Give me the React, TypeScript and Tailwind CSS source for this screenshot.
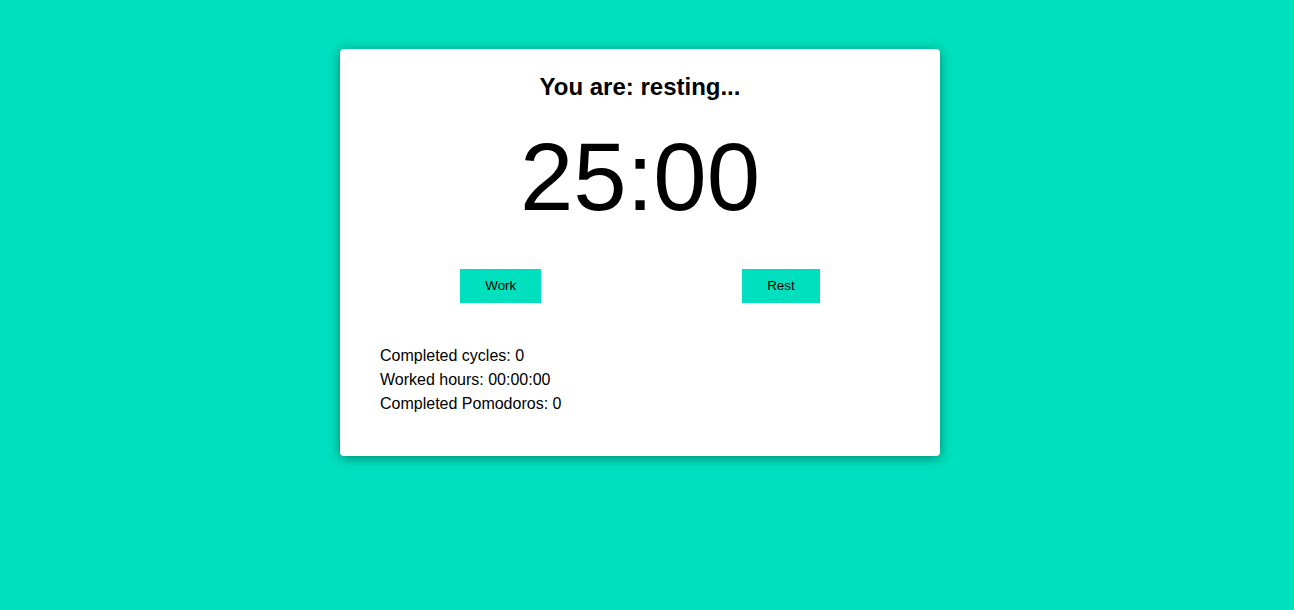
import { useState } from "react";

const App = () => {
	const [mode, setMode] = useState<"working" | "resting">("resting");
	const cycles = 0;
	const workedHours = "00:00:00";
	const pomodoros = 0;

	return (
		<div className="flex min-h-[610px] w-full justify-center bg-[#00e0be] pr-[14px] pt-[49px] font-['Liberation_Sans',Arial,sans-serif] text-black">
			<div className="flex h-[407px] w-[600px] flex-col rounded-[4px] bg-white shadow-[0_2px_12px_rgba(0,0,0,0.4)]">
				<h1 className="mt-[22px] text-center text-[24px] font-bold leading-[32px]">
					You are: {mode}...
				</h1>
				<div className="mt-[26px] text-center text-[96px] leading-[96px]">25:00</div>
				<div className="mt-[44px] flex justify-center gap-[201px]">
					<button
						type="button"
						className="h-[34px] bg-[#00e0be] px-[25px] text-[13.333px] text-black"
						onClick={() => setMode("working")}
					>
						Work
					</button>
					<button
						type="button"
						className="h-[34px] bg-[#00e0be] px-[25px] text-[13.333px] text-black"
						onClick={() => setMode("resting")}
					>
						Rest
					</button>
				</div>
				<div className="mt-[41px] px-[40px] text-[16px] leading-[24px]">
					<p>Completed cycles: {cycles}</p>
					<p>Worked hours: {workedHours}</p>
					<p>Completed Pomodoros: {pomodoros}</p>
				</div>
			</div>
		</div>
	);
};

export default App;
